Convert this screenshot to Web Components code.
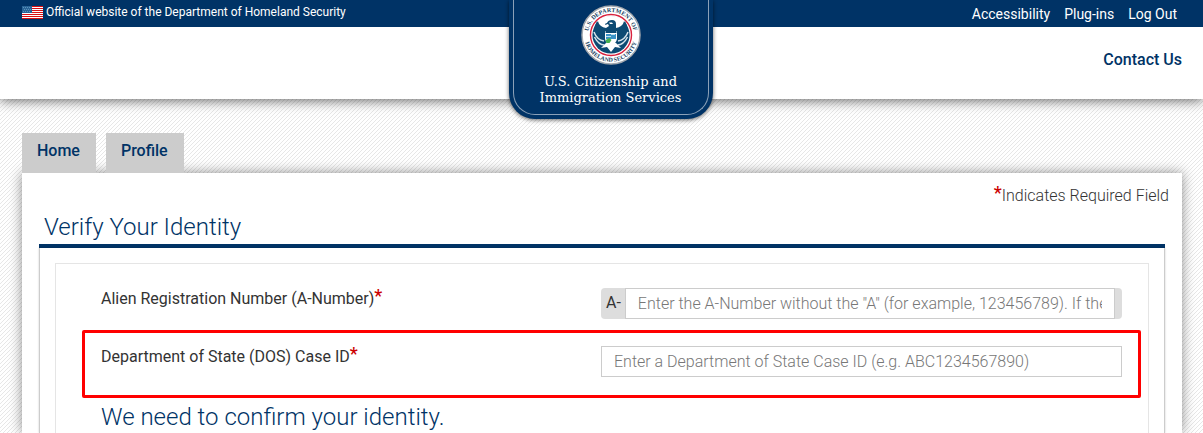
<!DOCTYPE html>
<html lang="en">
<head>
<meta charset="utf-8">
<meta name="viewport" content="width=device-width, initial-scale=1">
<title>Verify Your Identity</title>
<style>
  html {
    --navy: #003366;
    --sans: Roboto, "Liberation Sans", sans-serif;
    --serif: "DejaVu Serif", "Liberation Serif", serif;
    font: 16px/20px var(--sans);
    color: #333;
  }
  body {
    margin: 0;
    min-height: 100vh;
    background: linear-gradient(135deg, #fff 38%, #e7e7e7 38% 50%, #fff 50% 88%, #e7e7e7 88%) 0 0 / 4px 4px;
  }
  h1, h2 {
    margin: 0;
    font-size: 24px;
    line-height: 32px;
    font-weight: 300;
    color: var(--navy);
  }
</style>
</head>
<body>
<site-header>
  <span slot="official">Official website of the Department of Homeland Security</span>
  <a slot="utility" href="#accessibility">Accessibility</a>
  <a slot="utility" href="#plugins">Plug-ins</a>
  <a slot="utility" href="#logout">Log Out</a>
  <a slot="contact" href="#contact">Contact Us</a>
  <site-brand slot="brand"></site-brand>
</site-header>
<page-tabs>
  <a href="#home">Home</a>
  <a href="#profile">Profile</a>
</page-tabs>
<page-panel>
  <span slot="note">Indicates Required Field</span>
  <h1 slot="title">Verify Your Identity</h1>
  <form-field name="anumber" label="Alien Registration Number (A-Number)" prefix="A-"
    placeholder='Enter the A-Number without the "A" (for example, 123456789). If the number has fewer digits, add zeros'></form-field>
  <form-field name="caseid" label="Department of State (DOS) Case ID" highlighted
    placeholder="Enter a Department of State Case ID (e.g. ABC1234567890)"></form-field>
  <h2 slot="next">We need to confirm your identity.</h2>
</page-panel>

<script>
class BaseElement extends HTMLElement {
  constructor() {
    super()
    this.attachShadow({ mode: 'open' })
    const template = document.createElement('template')
    template.innerHTML = this.constructor.html
    this.shadowRoot.appendChild(template.content.cloneNode(true))
  }
}

class UsFlag extends BaseElement {
  static html = `<style>
    :host { display: block; width: 21px; height: 13px; }
    svg { display: block; }
  </style>
  <svg width="21" height="13" viewBox="0 0 21 13" shape-rendering="crispEdges" aria-hidden="true">
    <path fill="#fff" d="M0 0h21v13H0z"/>
    <path stroke="#d80f14" d="M0 .5h21M0 2.5h21M0 4.5h21M0 6.5h21M0 8.5h21M0 10.5h21M0 12.5h21"/>
    <path fill="#2a6496" d="M0 0h10v7H0z"/>
    <path stroke="#5b93bb" stroke-dasharray="1 1" d="M1 1.5h8M2 3.5h7M1 5.5h8"/>
  </svg>`
}

class DhsSeal extends BaseElement {
  static html = `<style>
    :host { display: block; width: 60px; height: 60px; }
    svg { display: block; }
    text { font: 700 6px "Liberation Serif", serif; fill: #16425f; }
  </style>
  <svg width="60" height="60" viewBox="0 0 60 60" aria-hidden="true">
    <defs>
      <path id="top" d="M10.500 42A22.900 22.900 0 1 1 49.500 42"/>
      <path id="bottom" d="M3.200 30A26.800 26.800 0 0 0 56.800 30"/>
    </defs>
    <circle cx="30" cy="30" r="29" fill="#fff" stroke="#a3a8ae" stroke-width="1.500"/>
    <circle cx="30" cy="30" r="20.500" fill="#fff" stroke="#d8213d" stroke-width="1.400"/>
    <circle cx="30" cy="30" r="18.600" fill="#0c4a73"/>
    <text><textPath href="#top" startOffset="50%" text-anchor="middle">U.S. DEPARTMENT OF</textPath></text>
    <text><textPath href="#bottom" startOffset="50%" text-anchor="middle">HOMELAND SECURITY</textPath></text>
    <!-- light ground behind the raised wings -->
    <path fill="#fff" d="M17 16q5-5 13-5t13 5q-1 6-7 9h-12q-6-3-7-9z"/>
    <!-- neck, shoulders and wings -->
    <path fill="#0c4a73" d="M26 18q1-3 5-3 4 0 4 4v4q6-1 9-7 4 7 1 14l-8 8H23l-8-8q-3-7 1-14 3 6 9 7l3-2-1-2-3 1q0-2 2-2z"/>
    <path fill="#fff" d="M28 17.500h3l1 1.500h-3z"/>
    <!-- wing and tail feathers -->
    <path fill="none" stroke="#d5e2ea" stroke-width="1.500" d="M13 27q3 8 10 9M47 27q-3 8-10 9M13.500 32q4 8 10 8M46.500 32q-4 8-10 8"/>
    <path fill="#fff" d="M25 38h10l5 5-6-1-4 5-4-5-6 1z"/>
    <!-- shield -->
    <path fill="#fff" d="M24 26h12v8q-1 5-6 7-5-2-6-7z"/>
    <path fill="#0c4a73" d="M24.500 26h11v2h-11z"/>
    <path fill="#3a93c6" d="M25 29h10v5H25z"/>
    <path fill="#bfe0ef" d="M25 31h5v1h-5zM30 29h4v1h-4z"/>
    <path fill="#45b04f" d="M24.500 35l4-2 2 2-2 3h-3z"/>
  </svg>`
}

class SiteBrand extends BaseElement {
  static html = `<style>
    :host {
      display: block;
      box-sizing: border-box;
      width: 204px;
      padding: 0 4px 4px;
      border-radius: 0 0 26px 26px;
      background: var(--navy);
      box-shadow: 0 1px 4px rgba(0, 0, 0, .6);
    }
    a {
      display: flex;
      flex-direction: column;
      align-items: center;
      gap: 9px;
      padding: 5px 0 8px;
      border: solid #8ba1b8;
      border-width: 0 1px 1px;
      border-radius: 0 0 22px 22px;
      color: #fff;
      font: 13px/16px var(--serif);
      text-align: center;
      text-decoration: none;
    }
  </style>
  <a href="#top">
    <dhs-seal></dhs-seal>
    <span>U.S. Citizenship and<br>Immigration Services</span>
  </a>`
}

class SiteHeader extends BaseElement {
  static html = `<style>
    :host {
      display: block;
      position: relative;
      background: #fff;
      box-shadow: 0 1px 12px rgba(0, 0, 0, .65);
    }
    .bar {
      display: flex;
      justify-content: space-between;
      align-items: center;
      box-sizing: border-box;
      height: 27px;
      padding: 0 26px 0 22px;
      background: var(--navy);
      color: #fff;
      font-size: 14px;
    }
    .official {
      display: flex;
      align-items: center;
      gap: 3px;
      padding-bottom: 3px;
      font-size: 12px;
    }
    nav { display: flex; gap: 14px; }
    .main {
      display: flex;
      justify-content: flex-end;
      padding: 23px 21px 29px;
    }
    ::slotted(a) { color: inherit; text-decoration: none; }
    ::slotted([slot=contact]) { color: var(--navy); font-weight: 500; }
    ::slotted([slot=brand]) {
      position: absolute;
      top: 0;
      left: calc(50% - 93px);
    }
  </style>
  <div class="bar">
    <div class="official"><us-flag></us-flag><slot name="official"></slot></div>
    <nav aria-label="Utility"><slot name="utility"></slot></nav>
  </div>
  <div class="main"><slot name="contact"></slot></div>
  <slot name="brand"></slot>`
}

class PageTabs extends BaseElement {
  static html = `<style>
    :host { display: block; margin: 34px 21px 0 22px; }
    nav { display: flex; gap: 10px; }
    ::slotted(a) {
      padding: 8px 16px 12px 15px;
      background: #ccc;
      color: var(--navy);
      font-weight: 500;
      text-decoration: none;
    }
  </style>
  <nav aria-label="Main"><slot></slot></nav>`
}

class PagePanel extends BaseElement {
  static html = `<style>
    :host {
      display: block;
      margin: 0 21px 0 22px;
      padding: 13px 17px 0;
      background: #fff;
      box-shadow: 0 0 12px rgba(0, 0, 0, .45);
    }
    .note {
      margin: 0 -4px 0 0;
      font-weight: 300;
      text-align: right;
    }
    .title {
      padding: 5px 5px 1px;
      border-bottom: 4px solid var(--navy);
    }
    .body {
      padding: 15px 15px 0;
      border: solid #ccc;
      border-width: 0 1px;
      box-shadow: 0 0 2px rgba(0, 0, 0, .2);
    }
    form {
      padding: 8px 7px 0 26px;
      border: solid #e5e5e5;
      border-width: 1px 1px 0;
    }
    ::slotted(h2) { padding: 3px 19px 0; }
  </style>
  <p class="note"><required-mark></required-mark><slot name="note"></slot></p>
  <div class="title"><slot name="title"></slot></div>
  <div class="body">
    <form>
      <slot></slot>
      <slot name="next"></slot>
    </form>
  </div>`
}

class RequiredMark extends BaseElement {
  static html = `<style>
    :host {
      color: #c00;
      font-size: 18px;
      font-weight: 500;
      line-height: 12px;
      vertical-align: 2px;
    }
  </style>*`
}

class FormField extends BaseElement {
  static html = `<style>
    :host {
      display: grid;
      grid-template-columns: 500fr 521fr;
      align-items: start;
      padding: 13px 16px 8px;
      border: 3px solid transparent;
    }
    :host([highlighted]) {
      padding-bottom: 18px;
      border-color: #f00;
      border-radius: 2px;
    }
    label { padding-top: 1px; }
    .group {
      display: flex;
      box-sizing: border-box;
      height: 31px;
    }
    .group.prefixed {
      padding-right: 7px;
      border-radius: 4px;
      background: #ddd;
    }
    .prefix { padding: 5px 4px 5px 5px; }
    input {
      flex: 1;
      min-width: 0;
      padding: 0 12px;
      border: 1px solid #ccc;
      border-radius: 0;
      background: #fff;
      color: inherit;
      font: 300 16px/20px var(--sans);
    }
    input::placeholder { color: #777; }
  </style>
  <label for="control"><span></span><required-mark></required-mark></label>
  <div class="group"><input id="control" type="text" required></div>`

  connectedCallback() {
    const input = this.shadowRoot.querySelector('input')
    this.shadowRoot.querySelector('label span').textContent = this.getAttribute('label')
    input.name = this.getAttribute('name')
    input.placeholder = this.getAttribute('placeholder')
    if (this.hasAttribute('prefix')) {
      const prefix = document.createElement('span')
      prefix.className = 'prefix'
      prefix.textContent = this.getAttribute('prefix')
      input.parentElement.classList.add('prefixed')
      input.before(prefix)
    }
  }
}

customElements.define('us-flag', UsFlag)
customElements.define('dhs-seal', DhsSeal)
customElements.define('site-brand', SiteBrand)
customElements.define('site-header', SiteHeader)
customElements.define('page-tabs', PageTabs)
customElements.define('required-mark', RequiredMark)
customElements.define('page-panel', PagePanel)
customElements.define('form-field', FormField)
</script>
</body>
</html>
